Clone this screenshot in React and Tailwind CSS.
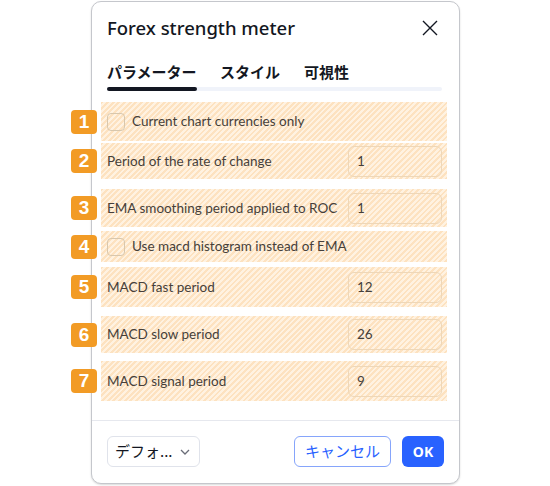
import React from "react";

const stripe =
  "bg-[repeating-linear-gradient(135deg,#fde2c0_0px,#fde2c0_2px,#fff2e1_2px,#fff2e1_4px)]";

function Badge({ n }) {
  return (
    <div className="absolute left-[-30px] top-1/2 -translate-y-1/2 w-[26px] h-[24px] rounded-[4px] bg-[#f29b25] text-white font-bold text-[19px] leading-[24px] flex items-center justify-center font-['Liberation_Sans',sans-serif]">
      {n}
    </div>
  );
}

function CheckRow({ n, h, mt, label }) {
  return (
    <div
      className={`relative ${stripe} flex items-center pl-[6px] ${h} ${mt}`}
    >
      <Badge n={n} />
      <div className="w-[18px] h-[18px] rounded-[4px] border border-[#d8c7ad]" />
      <span className="ml-[7px] text-[13.5px] text-[#463f3a] font-['Lato',sans-serif]">
        {label}
      </span>
    </div>
  );
}

function InputRow({ n, h, mt, label, value }) {
  return (
    <div
      className={`relative ${stripe} flex items-center justify-between pl-[6px] pr-[5px] ${h} ${mt}`}
    >
      <Badge n={n} />
      <span className="text-[13.5px] text-[#463f3a] font-['Lato',sans-serif]">
        {label}
      </span>
      <div className="w-[94px] h-[31px] rounded-[6px] border border-[#eed7b8] flex items-center pl-[8px] text-[13.5px] text-[#463f3a] font-['Lato',sans-serif]">
        {value}
      </div>
    </div>
  );
}

export default function App() {
  return (
    <div className="w-[550px] h-[486px] bg-white overflow-hidden">
      <div className="ml-[91px] mt-[1px] w-[369px] h-[483px] border border-[#c5c7cc] rounded-[10px] bg-white flex flex-col shadow-[0_1px_2px_rgba(0,0,0,0.15)]">
        <div className="px-[15px] pt-[14px]">
          <div className="flex items-center justify-between h-[24px]">
            <span className="text-[18.5px] font-medium text-[#131722] font-['Noto_Sans',sans-serif] leading-[24px]">
              Forex strength meter
            </span>
            <svg width="18" height="18" viewBox="0 0 18 18" className="mr-[5px]">
              <path
                d="M2 2L16 16M16 2L2 16"
                stroke="#131722"
                strokeWidth="1.4"
                fill="none"
              />
            </svg>
          </div>
          <div className="mt-[21px] flex h-[22px] items-center text-[15px] font-bold text-[#131722] font-['Noto_Sans_CJK_JP',sans-serif] leading-[22px]">
            <span className="w-[90px]">パラメーター</span>
            <span className="ml-[23px]">スタイル</span>
            <span className="ml-[24px]">可視性</span>
          </div>
          <div className="mt-[4px] h-[4px] w-[335px] rounded-full bg-[#f0f3fa] flex">
            <div className="w-[90px] h-[4px] rounded-full bg-[#131722]" />
          </div>
        </div>

        <div className="ml-[9px] w-[346px] mt-[11px] flex flex-col">
          <CheckRow n="1" h="h-[39px]" mt="" label="Current chart currencies only" />
          <InputRow n="2" h="h-[36px]" mt="mt-[2px]" label="Period of the rate of change" value="1" />
          <InputRow n="3" h="h-[38px]" mt="mt-[10px]" label="EMA smoothing period applied to ROC" value="1" />
          <CheckRow n="4" h="h-[31px]" mt="mt-[4px]" label="Use macd histogram instead of EMA" />
          <InputRow n="5" h="h-[40px]" mt="mt-[5px]" label="MACD fast period" value="12" />
          <InputRow n="6" h="h-[37px]" mt="mt-[9px]" label="MACD slow period" value="26" />
          <InputRow n="7" h="h-[40px]" mt="mt-[8px]" label="MACD signal period" value="9" />
        </div>

        <div className="mt-[19px] border-t border-[#e6e8ee] flex items-center px-[15px] pt-[15px]">
          <div className="w-[93px] h-[31px] rounded-[6px] border border-[#e0e3eb] flex items-center justify-between pl-[7px] pr-[9px] text-[15px] text-[#131722] font-['Noto_Sans_CJK_JP',sans-serif]">
            <span>デフォ...</span>
            <svg width="10" height="6" viewBox="0 0 10 6">
              <path d="M1 1L5 5L9 1" stroke="#6a6d78" strokeWidth="1.3" fill="none" />
            </svg>
          </div>
          <div className="ml-auto w-[97px] h-[31px] rounded-[6px] border border-[#86a5fb] flex items-center justify-center text-[15px] text-[#2962ff] font-['Noto_Sans_CJK_JP',sans-serif]">
            キャンセル
          </div>
          <div className="ml-[11px] w-[42px] h-[31px] rounded-[6px] bg-[#2962ff] flex items-center justify-center text-[14px] font-bold text-white font-['Noto_Sans',sans-serif]">
            OK
          </div>
        </div>
      </div>
    </div>
  );
}
